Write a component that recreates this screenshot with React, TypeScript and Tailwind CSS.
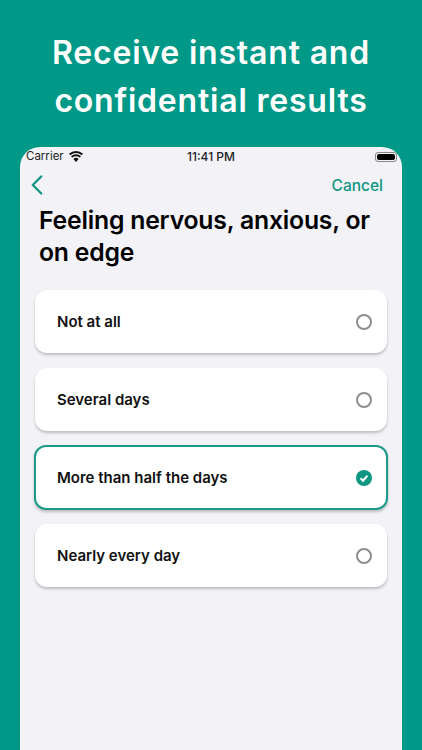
import { ChevronLeft } from 'lucide-react'

const options = ['Not at all', 'Several days', 'More than half the days', 'Nearly every day']

function Option({ label, selected }: { label: string; selected: boolean }) {
  return (
    <div
      className={
        selected
          ? 'relative -mx-px -my-px flex h-[65px] items-center justify-between rounded-[12px] border-2 border-[#1b9a89] bg-white pl-[21px] pr-[14px] shadow-[0_2px_3px_rgba(0,0,0,0.22)]'
          : 'flex h-[63px] items-center justify-between rounded-[12px] bg-white pl-[22px] pr-[15px] shadow-[0_2px_3px_rgba(0,0,0,0.22)]'
      }
    >
      <span className="pt-[2px] text-[15px] font-semibold text-[#111]">{label}</span>
      {selected ? (
        <svg width="16" height="16" viewBox="0 0 16 16">
          <circle cx="8" cy="8" r="8" fill="#0f9683" />
          <path d="M4.6 8.3 7 10.7 11.4 5.6" fill="none" stroke="#fff" strokeWidth="2" />
        </svg>
      ) : (
        <div className="h-4 w-4 rounded-full border-2 border-[#8e8e8e]" />
      )}
    </div>
  )
}

export default function App() {
  return (
    <div className="flex h-[750px] w-[422px] flex-col overflow-hidden bg-[#009887] font-['Inter',sans-serif]">
      <h1 className="pt-[29px] text-center text-[32px] font-semibold leading-[48px] tracking-[0.8px] text-white">
        Receive instant and
        <br />
        confidential results
      </h1>

      <div className="mx-5 mt-[22px] flex-1 rounded-t-[20px] bg-[#f2f2f7]">
        <div className="relative flex h-[19px] items-center justify-between pl-[6px] pr-[5px] text-[12px] text-[#222]">
          <div className="flex items-center gap-[5px]">
            <span className="text-[11.5px]">Carrier</span>
            <svg width="14" height="11" viewBox="0 0 14 11">
              <path d="M7 11 4.4 8a3.6 3.6 0 0 1 5.2 0Z" fill="#111" />
              <path d="M2.7 5.9a6.2 6.2 0 0 1 8.6 0M.7 3.6a9.2 9.2 0 0 1 12.6 0" fill="none" stroke="#111" strokeWidth="2" />
            </svg>
          </div>
          <span className="absolute left-1/2 -translate-x-1/2 font-medium">11:41 PM</span>
          <div className="flex h-[10px] w-[22px] items-center rounded-[3px] border border-[#888] p-[1px]">
            <div className="h-full w-full rounded-[2px] bg-black" />
          </div>
        </div>

        <div className="mt-[2px] flex h-[33px] items-center justify-between pr-[19px]">
          <ChevronLeft className="text-[#0f9683]" size={34} strokeWidth={1.6} />
          <span className="pt-[2px] text-[15.5px] font-medium text-[#0f9683]">Cancel</span>
        </div>

        <h2 className="px-[19px] pt-[3px] text-[24.75px] font-semibold leading-[32px] tracking-[-0.2px] text-black">
          Feeling nervous, anxious, or on edge
        </h2>

        <div className="mt-[22px] flex flex-col gap-[15px] px-[15px]">
          {options.map((o, i) => (
            <Option key={o} label={o} selected={i === 2} />
          ))}
        </div>
      </div>
    </div>
  )
}
